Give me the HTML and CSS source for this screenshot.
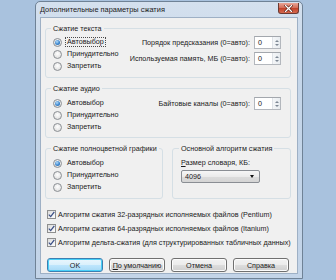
FILE: index.html
```html
<!DOCTYPE html>
<html lang="ru">
<head>
<meta charset="utf-8">
<link rel="stylesheet" href="styles.css">
</head>
<body>
<div class="win">
  <div class="titlebar">
    <span class="title">Дополнительные параметры сжатия</span>
    <span class="close"><svg width="9" height="7" viewBox="0 0 9 7"><path d="M1.5 0.5 L7.5 6.5 M7.5 0.5 L1.5 6.5" stroke="#5a1e14" stroke-width="2.6" stroke-linecap="square"/><path d="M1.5 0.5 L7.5 6.5 M7.5 0.5 L1.5 6.5" stroke="#fff" stroke-width="1.3" stroke-linecap="square"/></svg></span>
  </div>
  <div class="client">
    <fieldset class="grp g1">
      <legend>Сжатие текста</legend>
      <div class="radios">
        <div class="row"><span class="radio on"></span><span class="lbl focus">Автовыбор</span></div>
        <div class="row"><span class="radio"></span><span class="lbl">Принудительно</span></div>
        <div class="row"><span class="radio"></span><span class="lbl">Запретить</span></div>
      </div>
      <div class="fields">
        <div class="field"><span>Порядок предсказания (0=авто):</span><span class="spin"><span class="val">0</span><span class="arrows"><i class="up"></i><i class="dn"></i></span></span></div>
        <div class="field"><span>Используемая память, МБ (0=авто):</span><span class="spin"><span class="val">0</span><span class="arrows"><i class="up"></i><i class="dn"></i></span></span></div>
      </div>
    </fieldset>
    <fieldset class="grp g2">
      <legend>Сжатие аудио</legend>
      <div class="radios">
        <div class="row"><span class="radio on"></span><span class="lbl">Автовыбор</span></div>
        <div class="row"><span class="radio"></span><span class="lbl">Принудительно</span></div>
        <div class="row"><span class="radio"></span><span class="lbl">Запретить</span></div>
      </div>
      <div class="fields">
        <div class="field"><span>Байтовые каналы (0=авто):</span><span class="spin"><span class="val">0</span><span class="arrows"><i class="up"></i><i class="dn"></i></span></span></div>
      </div>
    </fieldset>
    <div class="pair">
      <fieldset class="grp g3">
        <legend>Сжатие полноцветной графики</legend>
        <div class="radios">
          <div class="row"><span class="radio on"></span><span class="lbl">Автовыбор</span></div>
          <div class="row"><span class="radio"></span><span class="lbl">Принудительно</span></div>
          <div class="row"><span class="radio"></span><span class="lbl">Запретить</span></div>
        </div>
      </fieldset>
      <fieldset class="grp g4">
        <legend>Основной алгоритм сжатия</legend>
        <div class="dictlbl"><u>Р</u>азмер словаря, КБ:</div>
        <div class="select"><span>4096</span><i class="caret"></i></div>
      </fieldset>
    </div>
    <div class="checks">
      <div class="crow"><span class="cb"><svg width="7" height="7" viewBox="0 0 7 7"><path d="M0.8 3.6 L2.7 5.6 L6.3 0.9" fill="none" stroke="#3b4f86" stroke-width="1.3"/></svg></span><span>Алгоритм сжатия 32-разрядных исполняемых файлов (Pentium)</span></div>
      <div class="crow"><span class="cb"><svg width="7" height="7" viewBox="0 0 7 7"><path d="M0.8 3.6 L2.7 5.6 L6.3 0.9" fill="none" stroke="#3b4f86" stroke-width="1.3"/></svg></span><span>Алгоритм сжатия 64-разрядных исполняемых файлов (Itanium)</span></div>
      <div class="crow"><span class="cb"><svg width="7" height="7" viewBox="0 0 7 7"><path d="M0.8 3.6 L2.7 5.6 L6.3 0.9" fill="none" stroke="#3b4f86" stroke-width="1.3"/></svg></span><span>Алгоритм дельта-сжатия (для структурированных табличных данных)</span></div>
    </div>
    <div class="buttons">
      <span class="btn def">OK</span>
      <span class="btn"><u>П</u>о умолчанию</span>
      <span class="btn">Отмена</span>
      <span class="btn">Справка</span>
    </div>
  </div>
</div>
</body>
</html>
```
FILE: styles.css
```css
* { box-sizing: border-box; }
html, body { margin: 0; padding: 0; }
body {
  width: 336px; height: 280px; overflow: hidden;
  background: #a9c2de;
  font-family: "Liberation Sans", Arial, sans-serif;
  font-size: 7.2px; line-height: 9px; color: #1b1b1b;
  white-space: nowrap;
}
.win {
  margin: 1px 0 0 35px;
  width: 268px; height: 278px;
  border: 1px solid #6f8296;
  border-radius: 5px 5px 0 0;
  background: linear-gradient(#d4e0ee, #c5d6e9 30%, #c3d4e8);
  padding: 0 4px 4px 4px;
  display: flex; flex-direction: column;
}
.titlebar {
  height: 15px; flex: none;
  display: flex; align-items: center;
  font-size: 7.4px; color: #1a1a1a;
}
.close {
  margin-left: auto; margin-right: -1px; align-self: flex-start; margin-top: 1px;
  width: 21px; height: 11px;
  border: 1px solid #6a3a33;
  border-top: none;
  border-radius: 0 0 3px 3px;
  background: linear-gradient(#e9a597, #d4705c 45%, #c2432c 55%, #d76a50);
  display: flex; align-items: center; justify-content: center;
}
.client {
  flex: 1;
  background: #f0f0f0;
  border: 1px solid #9eb0c5;
  padding: 6px 6px 0 4px;
  display: flex; flex-direction: column;
}
.grp {
  margin: 0; min-width: 0;
  border: 1px solid #d5dfe5;
  border-radius: 3px;
  padding: 3px 9px 4px 7px;
  display: flex;
}
.grp legend {
  padding: 0 2px; margin-left: -2px;
  line-height: 9px; color: #1b1b1b;
  white-space: nowrap;
}
.g1 { height: 54px; }
.g2 { height: 54px; margin-top: 6px; padding-top: 4px; }
.pair { display: flex; gap: 9px; margin-top: 6px; }
.g3 { width: 118px; height: 55px; padding-top: 4px; flex-direction: column; }
.g4 { width: 119px; height: 55px; flex-direction: column; padding: 5px 9px 0 8px; }
.radios { display: flex; flex-direction: column; }
.row { height: 12px; display: flex; align-items: center; gap: 3px; }
.radio {
  flex: none;
  width: 9px; height: 9px; border-radius: 50%;
  border: 1px solid #8b8f94;
  background: radial-gradient(circle at 50% 40%, #ffffff, #e3e3e3 70%, #d2d2d2);
  display: flex; align-items: center; justify-content: center;
}
.radio.on::after {
  content: ""; width: 5px; height: 5px; border-radius: 50%;
  background: radial-gradient(circle at 40% 35%, #b6dcf8, #3b86cf 55%, #1f5d9f);
}
.lbl { padding: 0 1px; border: 1px solid transparent; line-height: 8px; }
.lbl.focus { border: 1px dotted #4a4a4a; }
.fields {
  margin-left: auto;
  display: flex; flex-direction: column; gap: 3px;
  margin-top: 0;
}
.field { height: 13px; display: flex; align-items: center; gap: 4px; justify-content: flex-end; }
.spin {
  width: 27px; height: 13px;
  border: 1px solid #b3b7bd; border-top-color: #a3a7ad;
  background: #fff;
  display: flex;
}
.val { flex: 1; padding-left: 3px; display: flex; align-items: center; }
.arrows {
  width: 8px; border-left: 1px solid #dfe3e8;
  background: linear-gradient(90deg, #f4f6f8, #e8ecf0);
  display: flex; flex-direction: column; align-items: center; justify-content: center; gap: 2px;
}
.arrows i { width: 0; height: 0; border-left: 2px solid transparent; border-right: 2px solid transparent; }
.arrows .up { border-bottom: 2px solid #7d8794; }
.arrows .dn { border-top: 2px solid #7d8794; }
.dictlbl { height: 9px; }
.dictlbl u, .btn u { text-decoration: underline; text-underline-offset: 1px; }
.select {
  margin-top: 3px;
  width: 79px; height: 13px;
  border: 1px solid #8a8e94;
  border-radius: 2px;
  background: linear-gradient(#f6f6f6, #ebebeb 50%, #dcdcdc 51%, #d4d4d4);
  display: flex; align-items: center;
  padding: 0 5px 0 3px;
}
.caret { margin-left: auto; width: 0; height: 0; border-left: 2.5px solid transparent; border-right: 2.5px solid transparent; border-top: 3px solid #111; }
.checks { margin-top: 8px; display: flex; flex-direction: column; padding-left: 2px; }
.crow { height: 14px; display: flex; align-items: center; gap: 2px; }
.cb {
  flex: none;
  width: 9px; height: 9px;
  border: 1px solid #8e8f8f;
  background: linear-gradient(135deg, #dcdcdc, #fdfdfd);
  display: flex; align-items: center; justify-content: center;
}
.buttons { margin-top: 9px; display: flex; gap: 6px; padding-left: 2px; }
.btn {
  width: 56px; height: 14px;
  border: 1px solid #707070; border-radius: 3px;
  background: linear-gradient(#f2f2f2, #ebebeb 50%, #dddddd 51%, #cfcfcf);
  display: flex; align-items: center; justify-content: center;
  box-shadow: inset 0 0 0 1px #fcfcfc;
}
.btn.def {
  border-color: #3c7fb1;
  box-shadow: inset 0 0 0 1px #48d0f8;
  background: linear-gradient(#eaf6fd, #d9f0fc 50%, #bee6fd 51%, #a7d9f5);
}
```
